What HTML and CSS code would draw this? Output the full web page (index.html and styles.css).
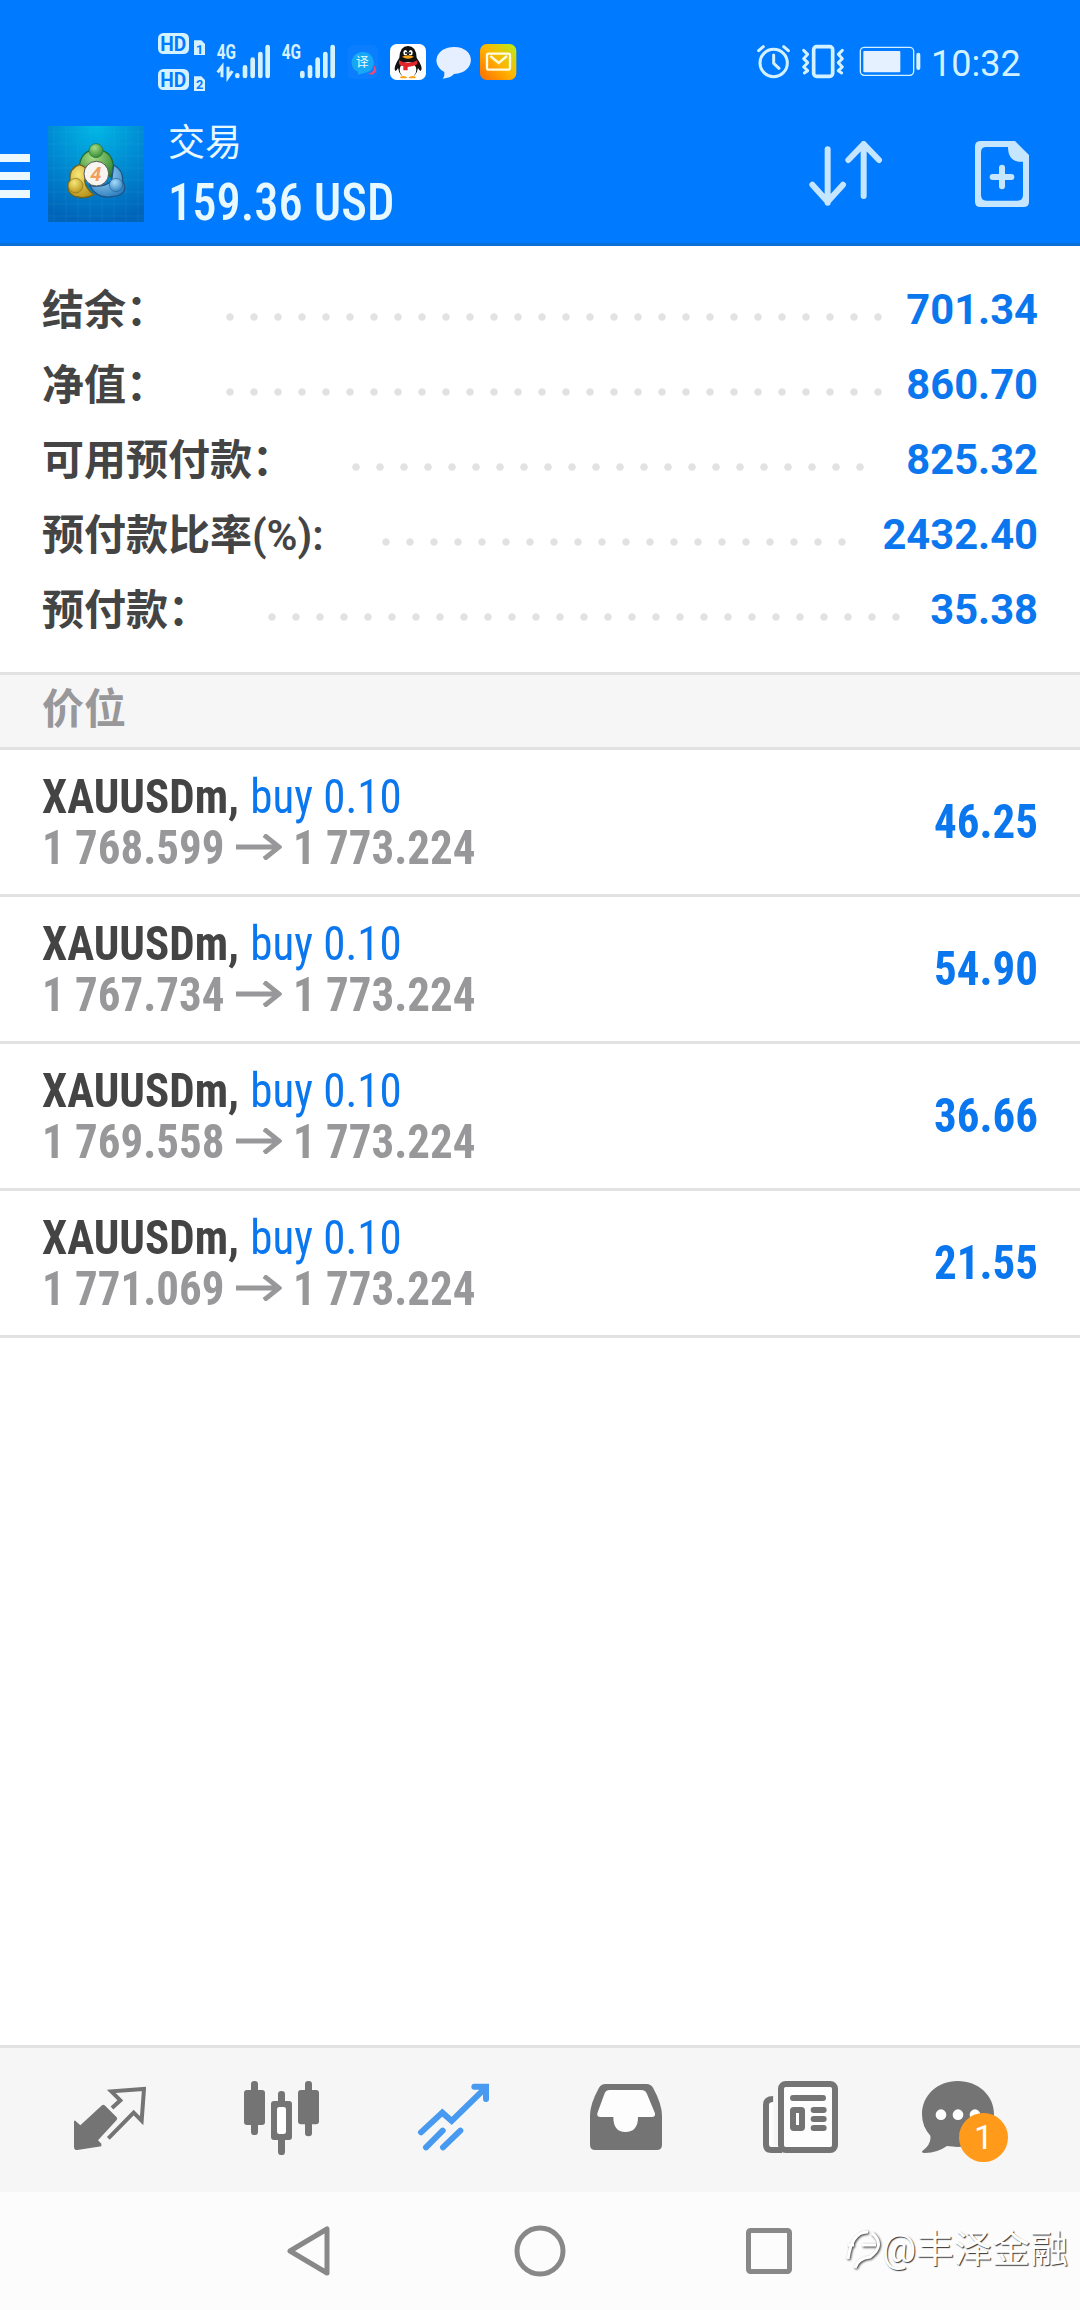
FILE: index.html
```
<!DOCTYPE html>
<html lang="zh-CN">
<head>
    <meta charset="utf-8">
    <title>交易</title>
    <link rel="stylesheet" href="styles.css">
</head>
<body>
    <header class="header">
        <div class="statusbar">
            <svg class="status-left" width="400" height="80" viewBox="0 0 1200 240">
                <g fill="#d4f1ff">
                    <rect x="54" y="39" width="93" height="63" rx="16"/>
                    <path d="M162 61h22l11 11v33h-33z"/>
                    <rect x="54" y="147" width="93" height="63" rx="16"/>
                    <path d="M162 169h22l11 11v33h-33z"/>
                </g>
                <g class="status-small" fill="#007aff">
                    <text x="61" y="92" font-size="58" textLength="78" lengthAdjust="spacingAndGlyphs">HD</text>
                    <text x="61" y="200" font-size="58" textLength="78" lengthAdjust="spacingAndGlyphs">HD</text>
                    <text x="168" y="101" font-size="38">1</text>
                    <text x="168" y="208" font-size="38">2</text>
                </g>
                <g class="status-small" fill="#d4f1ff">
                    <text x="230" y="117" font-size="58" textLength="58" lengthAdjust="spacingAndGlyphs">4G</text>
                    <text x="425" y="117" font-size="58" textLength="58" lengthAdjust="spacingAndGlyphs">4G</text>
                </g>
                <g stroke="#d4f1ff" stroke-width="14" stroke-linecap="round" fill="none">
                    <path d="M292 166v2M315 142v26M338 119v49M361 102v66M383 81v87"/>
                    <path d="M487 159v9M510 142v26M533 119v49M556 102v66M578 81v87"/>
                    <path stroke-width="9" stroke-linecap="butt" d="M246 172v-32l-13 17M264 140v32l13 -19"/>
                </g>
                <rect x="622" y="75" width="92" height="102" rx="18" fill="#0b7dff"/>
                <path d="M684 160q20 0 18-24q16 18-6 29z" fill="#ee4a78"/>
                <path d="M668 96c42 0 44 58 8 62l-22 6 0-9c-32-12-22-59 14-59z" fill="#16a8f5"/>
                <text x="648" y="138" font-size="38" class="cn" fill="#e5fbff">译</text>
                <rect x="750" y="72" width="108" height="108" rx="20" fill="#fff"/>
                <path d="M778 113q2-35 26-35t26 35q22 31 12 40q-4-2-8-9q-4 28-30 30q-26-2-30-30q-4 9-8 9q-8-9 12-40z" fill="#111"/>
                <ellipse cx="804" cy="150" rx="25" ry="24" fill="#fff"/>
                <path d="M777 121q27 15 55 0v12q-14 8-29 8v10h-13v-12q-10-2-13-7z" fill="#e2252b"/>
                <path d="M786 110q18-9 36 0q-18 12-36 0z" fill="#f9a51b"/>
                <path d="M780 171q10-7 22 1l-4 3h-16zM806 172q14-8 22-1l-3 4h-17z" fill="#f9a51b"/>
                <ellipse cx="796" cy="98" rx="6" ry="8" fill="#fff"/>
                <ellipse cx="812" cy="98" rx="6" ry="8" fill="#fff"/>
                <circle cx="798" cy="99" r="3"/>
                <circle cx="810" cy="99" r="3"/>
                <path d="M942 81c68 0 68 78 0 81q-10 12-34 14q7-8 5-20c-42-23-25-75 29-75z" fill="#e6efff"/>
                <defs>
                    <linearGradient id="mail" x1="0" y1="1" x2="1" y2="0">
                        <stop offset="0" stop-color="#ff6a00"/>
                        <stop offset=".5" stop-color="#ffb400"/>
                        <stop offset="1" stop-color="#b6ee1c"/>
                    </linearGradient>
                </defs>
                <rect x="1020" y="72" width="109" height="108" rx="20" fill="url(#mail)"/>
                <rect x="1041" y="101" width="69" height="48" rx="5" fill="none" stroke="#fffbe0" stroke-width="7"/>
                <path d="M1051 108l25 21 25-21" fill="none" stroke="#fffbe0" stroke-width="7"/>
            </svg>
            <svg class="status-right" width="190" height="80" viewBox="0 0 570 240">
                <g fill="none" stroke="#d4f1ff" stroke-linecap="round" stroke-linejoin="round">
                    <circle cx="101" cy="129" r="41" stroke-width="9"/>
                    <path stroke-width="9" d="M101 105v25l16 15M56 92l14-12M145 92l-14-12"/>
                    <rect x="221" y="80" width="57" height="89" rx="9" stroke-width="11"/>
                    <path stroke-width="9" d="M191 91l12 12-12 13 12 12-12 13 12 11-10 7M307 91l-12 12 12 13-12 12 12 13-12 11 10 7"/>
                    <rect x="361" y="82" width="160" height="84" rx="12" stroke-width="4"/>
                    <path stroke-width="12" d="M535 104v40"/>
                </g>
                <rect x="370" y="93" width="111" height="64" rx="3" fill="#e6f1ff"/>
            </svg>
            <span class="clock">10:32</span>
        </div>
        <div class="toolbar">
            <div class="menu"><i></i><i></i><i></i></div>
            <svg class="logo" width="96" height="96" viewBox="0 0 288 288">
                <defs>
                    <radialGradient id="logobg" cx=".5" cy="0" r="1">
                        <stop offset="0" stop-color="#00b8e6"/>
                        <stop offset=".5" stop-color="#008bd2"/>
                        <stop offset="1" stop-color="#0064b8"/>
                    </radialGradient>
                    <radialGradient id="green" cx=".4" cy=".3" r=".8">
                        <stop offset="0" stop-color="#a6dc84"/>
                        <stop offset="1" stop-color="#277f2b"/>
                    </radialGradient>
                    <radialGradient id="yellow" cx=".4" cy=".3" r=".8">
                        <stop offset="0" stop-color="#f8e777"/>
                        <stop offset="1" stop-color="#b38b12"/>
                    </radialGradient>
                    <radialGradient id="sky" cx=".4" cy=".3" r=".8">
                        <stop offset="0" stop-color="#a9dcf8"/>
                        <stop offset="1" stop-color="#2478bb"/>
                    </radialGradient>
                </defs>
                <rect width="288" height="288" fill="url(#logobg)"/>
                <path d="M18 0v288M54 0v288M90 0v288M126 0v288M162 0v288M198 0v288M234 0v288M270 0v288M0 18h288M0 54h288M0 90h288M0 126h288M0 162h288M0 198h288M0 234h288M0 270h288" stroke="#36b5e5" stroke-opacity=".22" stroke-width="2"/>
                <g stroke-width="4">
                    <path d="M94 119q6-46 50-49q48 3 52 50q1 19-7 33l-45-30-42 24q-10-12-8-28z" fill="url(#green)" stroke="#1d6e35"/>
                    <path d="M94 116q-31 10-28 47q-10 14-4 32q10 17 28 18q24 6 48-7q-26-19-28-42l7-34q-11-12-23-14z" fill="url(#yellow)" stroke="#6d6420"/>
                    <path d="M197 117q29 15 27 48q10 18 3 32q-11 14-30 14q-31 7-52-8q-13-9-20-25 42 9 66-14z" fill="url(#sky)" stroke="#1d5489"/>
                </g>
                <circle cx="144" cy="74" r="21" fill="url(#green)" stroke="#1d6e35" stroke-width="2"/>
                <circle cx="83" cy="179" r="22" fill="url(#yellow)" stroke="#88731b" stroke-width="2"/>
                <circle cx="204" cy="177" r="20" fill="url(#sky)" stroke="#25659b" stroke-width="2"/>
                <circle cx="145" cy="143" r="37" fill="#f8f4f0" stroke="#555" stroke-width="3"/>
                <text class="logo-num" x="127" y="165" font-size="60">4</text>
            </svg>
            <div class="heading">
                <div class="page-name">交易</div>
                <div class="profit cond">159.36 USD</div>
            </div>
            <svg class="sort" width="74" height="66" viewBox="0 0 222 198" fill="none" stroke="#c6e6ff" stroke-width="18" stroke-linecap="round" stroke-linejoin="round">
                <path d="M56 25v160M10 131l46 51 46-51M164 165V13M118 57l46-48 46 48"/>
            </svg>
            <svg class="new-order" width="54" height="66" viewBox="0 0 162 198">
                <path d="M18 0H120L162 42V182Q162 198 146 198H16Q0 198 0 182V16Q0 0 18 0zM34 18Q18 18 18 34V162Q18 179 34 179H128Q144 179 144 162V62H132Q99 58 99 18z" fill="#c6e6ff" fill-rule="evenodd"/>
                <path d="M81 80v56M53 108h56" stroke="#c6e6ff" stroke-width="18" stroke-linecap="round"/>
            </svg>
        </div>
    </header>

    <section class="summary">
        <div class="summary-row"><span class="label">结余：</span><span class="dots n28"></span><span class="amount">701.34</span></div>
        <div class="summary-row"><span class="label">净值：</span><span class="dots n28"></span><span class="amount">860.70</span></div>
        <div class="summary-row"><span class="label">可用预付款：</span><span class="dots n22"></span><span class="amount">825.32</span></div>
        <div class="summary-row"><span class="label">预付款比率<span class="latin">(%):</span></span><span class="dots n20"></span><span class="amount">2432.40</span></div>
        <div class="summary-row"><span class="label">预付款：</span><span class="dots n27"></span><span class="amount">35.38</span></div>
    </section>

    <div class="section-title">价位</div>

    <main class="positions">
        <div class="position">
            <div class="info cond">
                <div class="line"><b>XAUUSDm,</b><span class="side">buy 0.10</span></div>
                <div class="line prices"><b>1 768.599</b><svg class="arrow" width="49" height="26" viewBox="0 0 49 26"><path d="M0 13h46M30 1l16 12-16 12"/></svg><b>1 773.224</b></div>
            </div>
            <b class="result cond">46.25</b>
        </div>
        <div class="position">
            <div class="info cond">
                <div class="line"><b>XAUUSDm,</b><span class="side">buy 0.10</span></div>
                <div class="line prices"><b>1 767.734</b><svg class="arrow" width="49" height="26" viewBox="0 0 49 26"><path d="M0 13h46M30 1l16 12-16 12"/></svg><b>1 773.224</b></div>
            </div>
            <b class="result cond">54.90</b>
        </div>
        <div class="position">
            <div class="info cond">
                <div class="line"><b>XAUUSDm,</b><span class="side">buy 0.10</span></div>
                <div class="line prices"><b>1 769.558</b><svg class="arrow" width="49" height="26" viewBox="0 0 49 26"><path d="M0 13h46M30 1l16 12-16 12"/></svg><b>1 773.224</b></div>
            </div>
            <b class="result cond">36.66</b>
        </div>
        <div class="position">
            <div class="info cond">
                <div class="line"><b>XAUUSDm,</b><span class="side">buy 0.10</span></div>
                <div class="line prices"><b>1 771.069</b><svg class="arrow" width="49" height="26" viewBox="0 0 49 26"><path d="M0 13h46M30 1l16 12-16 12"/></svg><b>1 773.224</b></div>
            </div>
            <b class="result cond">21.55</b>
        </div>
    </main>

    <nav class="tabs">
        <div class="tab">
            <svg width="72" height="84" viewBox="102 144 216 252">
                <path d="M186 226q4-4 8 0l36 36q3 4 0 8l-56 61 10 10v8l-72 11q-10 0-10-10v-78h4l15 14z" fill="#747474"/>
                <path d="M216 234l25-23-27-27 98-7-7 95-24-24-76 77" fill="none" stroke="#747474" stroke-width="12"/>
            </svg>
        </div>
        <div class="tab">
            <svg width="76" height="84" viewBox="612 144 228 252">
                <g fill="#747474">
                    <rect x="612" y="180" width="63" height="105" rx="9"/>
                    <rect x="633" y="153" width="21" height="162" rx="10"/>
                    <rect x="774" y="180" width="63" height="103" rx="9"/>
                    <rect x="795" y="153" width="21" height="166" rx="10"/>
                    <rect x="693" y="213" width="63" height="117" rx="9"/>
                    <rect x="714" y="183" width="21" height="192" rx="10"/>
                </g>
                <rect x="711" y="231" width="27" height="81" rx="7" fill="#fff"/>
            </svg>
        </div>
        <div class="tab">
            <svg width="75" height="84" viewBox="1131 144 225 252" fill="none" stroke="#479aef" stroke-width="18" stroke-linecap="round">
                <path d="M1143 307l64-59 28 25 100-98M1303 170h35v37M1158 352l50-50M1209 352l52-50"/>
            </svg>
        </div>
        <div class="tab">
            <svg width="72" height="84" viewBox="92 144 216 252">
                <path d="M138 162H262Q274 162 281 173Q308 222 308 257V344Q308 360 292 360H108Q92 360 92 344V257Q92 222 119 173Q126 162 138 162z" fill="#747474"/>
                <path d="M150 180H245Q257 180 262 190L287 250Q289 261 278 261H236Q236 306 198 306Q162 306 162 261H123Q112 261 114 250L136 190Q141 180 150 180z" fill="#fdfdfd"/>
            </svg>
        </div>
        <div class="tab">
            <svg width="79" height="84" viewBox="596 144 237 252" fill="none" stroke="#747474">
                <path d="M639 207Q617 207 617 224V344Q617 360 633 360H665" fill="#fdfdfd" stroke-width="18"/>
                <rect x="662" y="162" width="162" height="198" rx="14" fill="#fdfdfd" stroke-width="18"/>
                <path d="M646 190v160" stroke="#f6f6f6" stroke-width="14"/>
                <rect x="698" y="240" width="27" height="54" rx="2" stroke-width="18"/>
                <path d="M698 204h90M760 240h30M760 267h30M760 294h30" stroke-width="18" stroke-linecap="round"/>
            </svg>
        </div>
        <div class="tab">
            <div class="chat">
                <svg width="96" height="84" viewBox="1086 144 288 252">
                    <path d="M1193 153c62 0 109 43 109 100s-47 98-109 98l-32-3q-28 20-66 21q-12 0-8-6q28-20 24-46q-25-27-25-64c0-57 46-100 107-100z" fill="#747474"/>
                    <g fill="#fff">
                        <circle cx="1143" cy="254" r="16"/>
                        <circle cx="1194" cy="254" r="16"/>
                        <circle cx="1245" cy="254" r="16"/>
                    </g>
                </svg>
                <span class="badge">1</span>
            </div>
        </div>
    </nav>

    <footer class="sysnav">
        <svg width="44" height="52" viewBox="0 0 44 52"><path d="M41 4v44L4 26z"/></svg>
        <svg width="52" height="52" viewBox="0 0 52 52"><circle cx="26" cy="26" r="23"/></svg>
        <svg width="46" height="46" viewBox="0 0 46 46"><rect x="2.5" y="2.5" width="41" height="41" rx="2"/></svg>
        <div class="watermark">
            <svg width="36" height="44" viewBox="0 0 36 44"><path d="M2 32Q6 4 22 5M2 18h6M16 18h14M26 6Q40 18 24 30Q12 31 9 41"/></svg>
            <span>@丰泽金融</span>
        </div>
    </footer>
</body>
</html>
```

FILE: styles.css
```
* {
    box-sizing: border-box;
}

body {
    display: flex;
    flex-direction: column;
    height: 2310px;
    margin: 0;
    font-family: Roboto, "Noto Sans CJK SC", sans-serif;
    background-color: #fff;
}

svg {
    display: block;
    flex: none;
}

/* header */
.header {
    height: 246px;
    background-color: #007aff;
    border-bottom: 3px solid #0b6fd6;
    color: #e8f8ff;
}

.statusbar {
    display: flex;
    height: 106px;
    padding: 20px 0 0 140px;
}

.status-small {
    font-family: Roboto, sans-serif;
    font-weight: 700;
}

.cn {
    font-family: "Noto Sans CJK SC", sans-serif;
}

.status-right {
    margin-left: 200px;
}

.clock {
    margin-left: 1px;
    padding-top: 22px;
    font-size: 36px;
    line-height: 44px;
    color: #d4f1ff;
}

.toolbar {
    display: flex;
    height: 137px;
}

.menu {
    display: flex;
    flex-direction: column;
    gap: 10px;
    width: 30px;
    margin: 48px 18px 0 0;
}

.menu i {
    height: 8px;
    background-color: #ebf9ff;
}

.logo {
    margin-top: 20px;
}

.logo-num {
    font-family: Roboto, sans-serif;
    font-weight: 700;
    font-style: italic;
    fill: #f0a05a;
}

.heading {
    width: 641px;
    margin-left: 24px;
}

/* condensed text */
.cond {
    font-family: "Roboto Condensed", Roboto, sans-serif;
    font-stretch: condensed;
    white-space: nowrap;
    transform: scaleX(0.937);
    transform-origin: left;
}

.page-name {
    margin-top: 12px;
    font-size: 37px;
    line-height: 52px;
}

.profit {
    padding-top: 3px;
    font-size: 51px;
    line-height: 60px;
    font-weight: 500;
    transform: scaleX(0.95);
}

.sort {
    margin-top: 35px;
}

.new-order {
    margin: 35px 0 0 92px;
}

/* account summary */
.summary {
    height: 426px;
    padding: 27px 42px 0 42px;
}

.summary-row {
    display: flex;
    align-items: center;
    height: 75px;
}

.label {
    font-size: 42px;
    line-height: 60px;
    font-weight: 700;
    color: #444;
    white-space: nowrap;
}

.latin {
    font-weight: 600;
}

.dots {
    height: 8px;
    margin: 13px 0 0 50px;
    background: radial-gradient(circle at 12px 4px, #e2e2e2 3.4px, transparent 4px) 0 0 / 24px 8px repeat-x;
}

.n20 {
    width: 480px;
}

.n22 {
    width: 528px;
}

.n27 {
    width: 648px;
}

.n28 {
    width: 672px;
}

.amount {
    margin-left: auto;
    padding-bottom: 2px;
    font-size: 41.7px;
    font-weight: 700;
    color: #0a77ee;
}

.section-title {
    height: 78px;
    padding: 5px 42px 0;
    border-top: 3px solid #e2e2e2;
    border-bottom: 3px solid #e2e2e2;
    background-color: #f6f6f7;
    font-size: 42px;
    line-height: 60px;
    font-weight: 700;
    color: #98989a;
}

/* open positions */
.positions {
    flex: 1;
}

.position {
    display: flex;
    justify-content: space-between;
    height: 147px;
    padding: 22px 42px 0 42px;
    border-bottom: 3px solid #e2e2e2;
    font-size: 48px;
    color: #444;
}

.line {
    display: flex;
    height: 51px;
    line-height: 50px;
}

.side {
    margin-left: 12px;
    font-weight: 450;
    color: #0a77ee;
}

.prices {
    color: #98989a;
}

.arrow {
    margin: 11px 12px 0 12px;
    fill: none;
    stroke: #98989a;
    stroke-width: 5;
}

.result {
    padding-top: 23px;
    line-height: 54px;
    color: #0a77ee;
    transform-origin: right;
}

/* bottom tabs */
.tabs {
    display: flex;
    height: 147px;
    padding: 30px 24px 0;
    border-top: 3px solid #e2e2e2;
    background-color: #f6f6f6;
}

.tab {
    display: flex;
    justify-content: center;
    width: 172px;
}

.chat {
    position: relative;
}

.badge {
    position: absolute;
    left: 37px;
    top: 35px;
    width: 49px;
    height: 49px;
    border-radius: 50%;
    background-color: #ff9a1a;
    color: #fff;
    font-size: 34px;
    line-height: 49px;
    text-align: center;
}

/* android navigation */
.sysnav {
    position: relative;
    display: flex;
    align-items: center;
    gap: 184px;
    height: 118px;
    padding: 0 0 0 286px;
    background-color: #fcfcfc;
    fill: none;
    stroke: #888;
    stroke-width: 5;
    stroke-linejoin: round;
}

.sysnav > svg:nth-child(3) {
    margin-left: -4px;
}

.watermark {
    position: absolute;
    left: 846px;
    top: 32px;
    display: flex;
    align-items: center;
    color: #fff;
    font-size: 38px;
    line-height: 50px;
    white-space: nowrap;
    text-shadow: 1px 1px 1px #333;
}

.watermark svg {
    stroke: #fff;
    stroke-width: 3;
    filter: drop-shadow(1px 1px 1px #333);
}
```
